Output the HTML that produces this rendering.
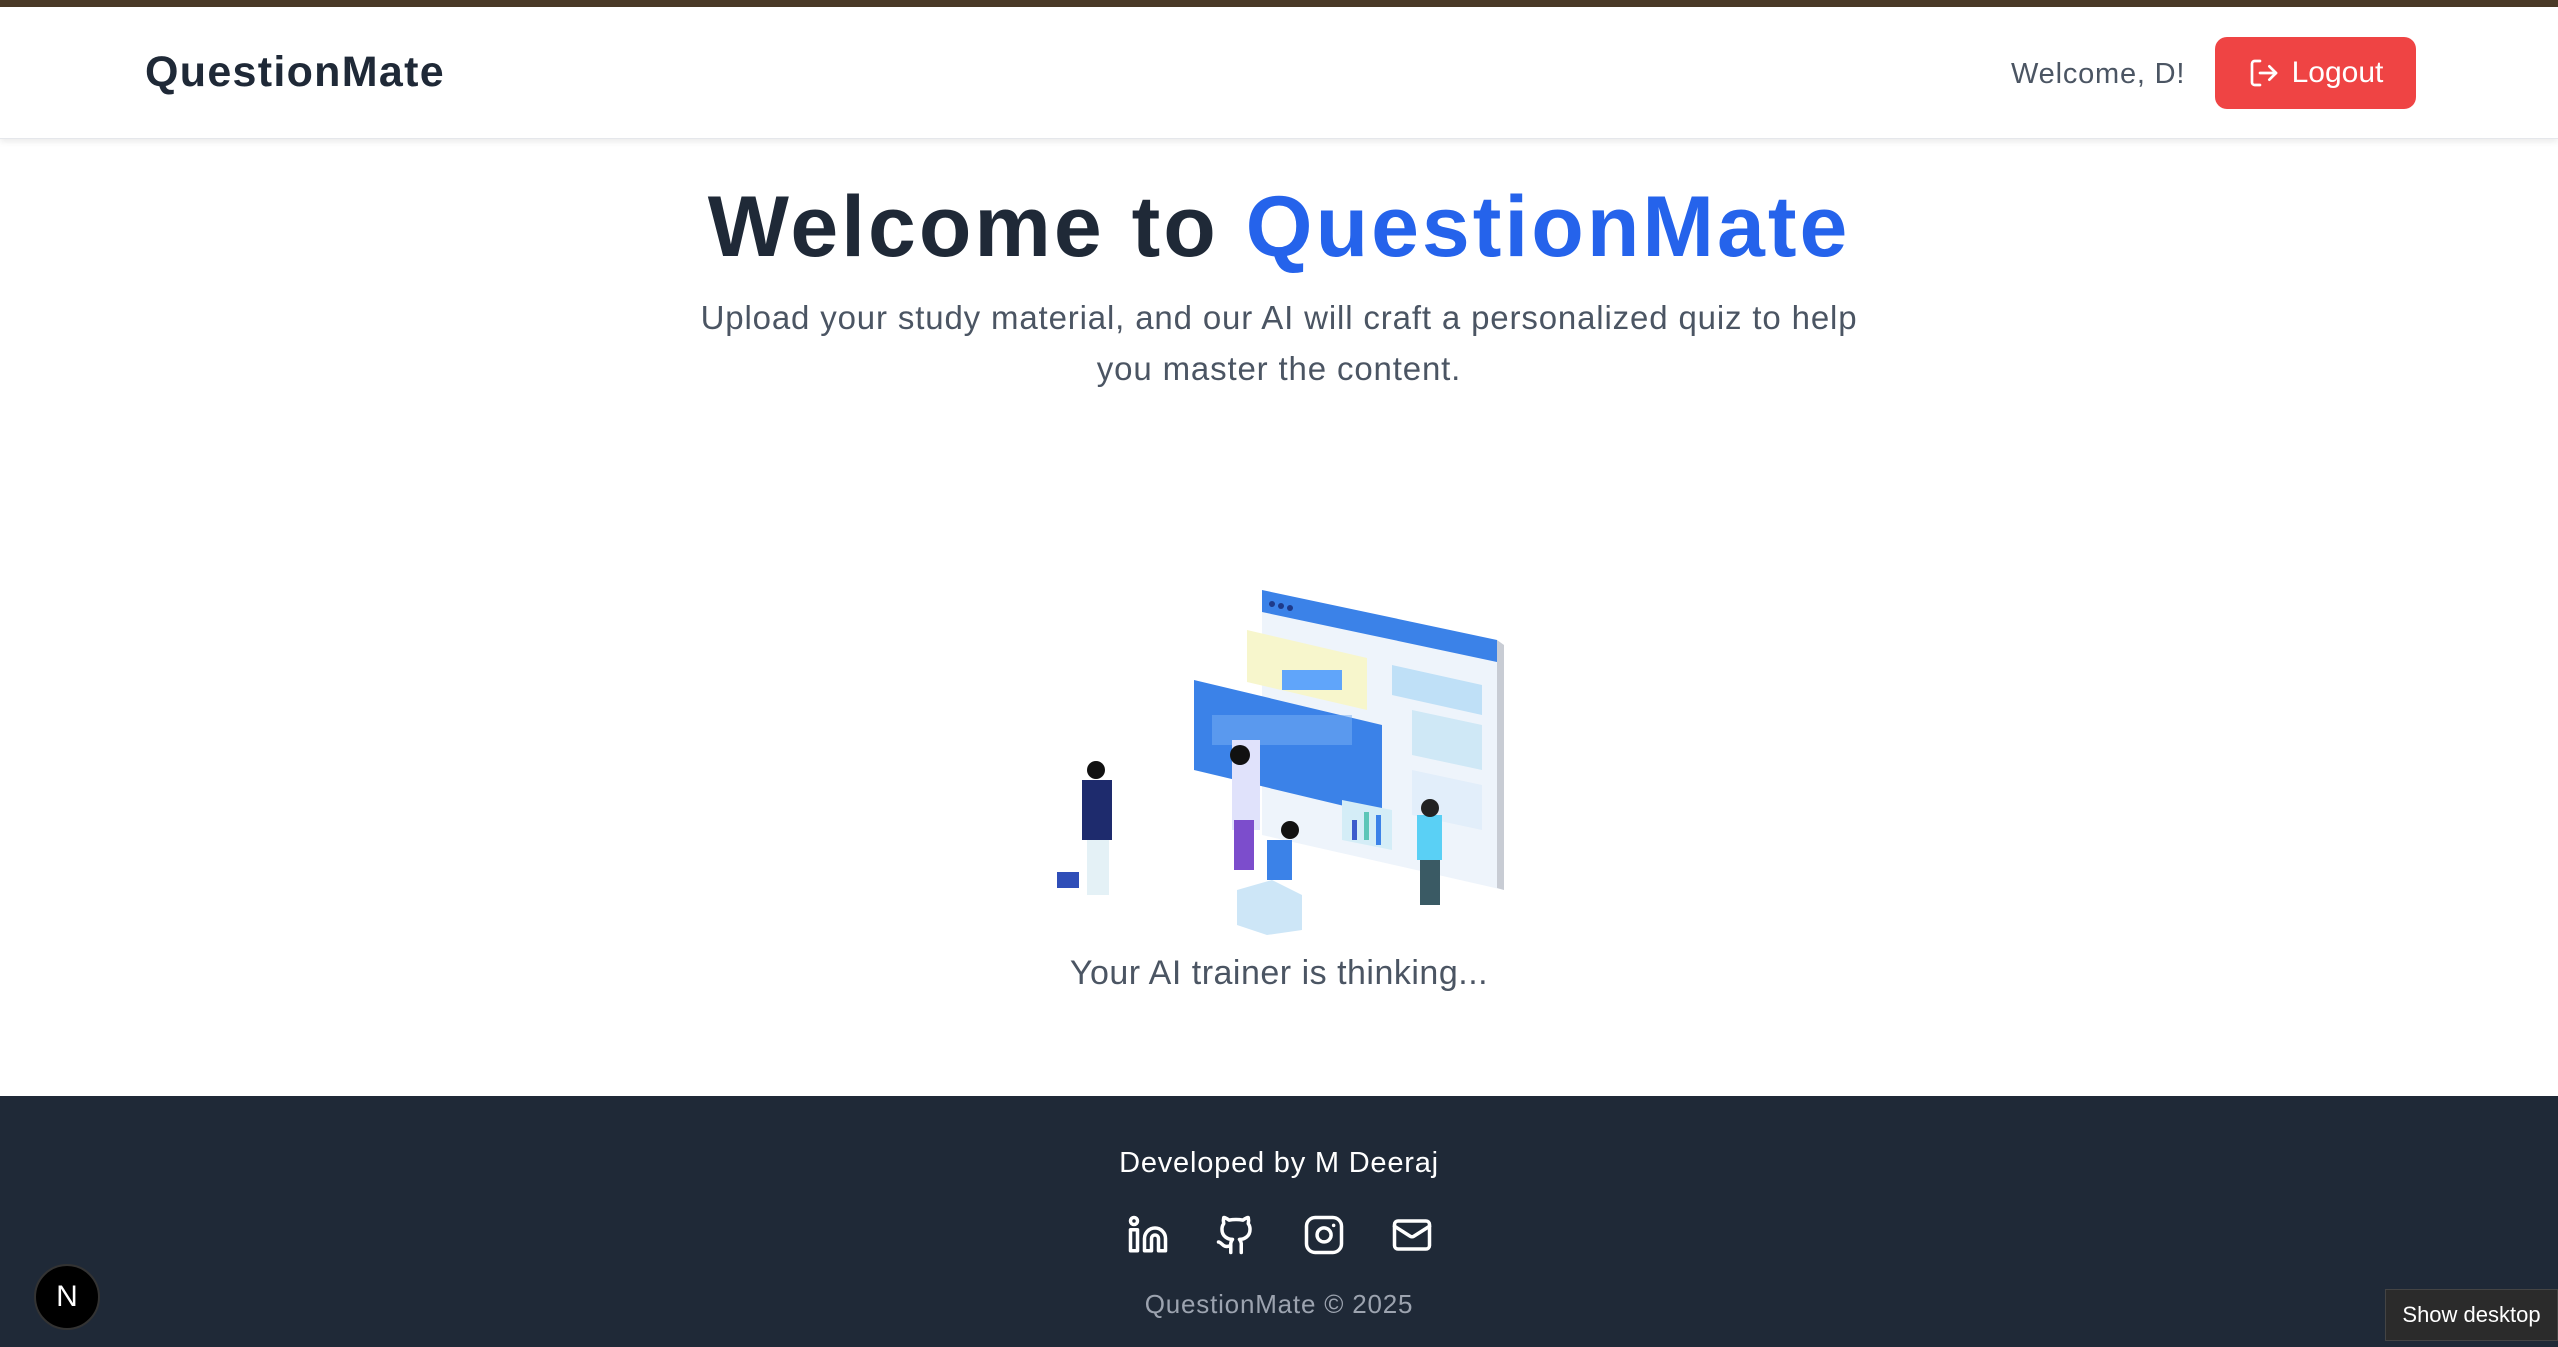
<!DOCTYPE html>
<html><head><meta charset="utf-8"><style>
*{margin:0;padding:0;box-sizing:border-box}
body{width:2558px;height:1347px;overflow:hidden;background:#fff;font-family:"Liberation Sans",sans-serif;position:relative}
.top{position:absolute;left:0;top:0;width:100%;height:7px;background:#4a3a27}
header{position:absolute;top:7px;left:0;width:100%;height:132px;background:#fff;box-shadow:0 3px 6px rgba(0,0,0,.08);border-bottom:1px solid #e5e7eb}
.logo{position:absolute;left:145px;top:41px;font-size:43px;font-weight:bold;color:#1f2937;letter-spacing:1.3px}
.wel{position:absolute;left:2011px;top:51px;font-size:29px;color:#4b5563;letter-spacing:.8px}
.btn{position:absolute;left:2215px;top:30px;width:201px;height:72px;background:#ef4444;border-radius:12px;color:#fff;font-size:30px;display:flex;align-items:center;justify-content:center;gap:12px}
h1{position:absolute;top:178px;left:0;width:100%;text-align:center;font-size:86px;font-weight:bold;color:#1f2937;letter-spacing:3px}
h1 span{color:#2563eb}
.sub{position:absolute;top:292px;left:0;width:100%;text-align:center;font-size:33px;line-height:51px;color:#4b5563;letter-spacing:.85px}
.think{position:absolute;top:954px;left:0;width:100%;text-align:center;font-size:34px;color:#4b5563;letter-spacing:.5px}
footer{position:absolute;top:1096px;left:0;width:100%;height:251px;background:#1f2937}
.dev{position:absolute;top:51px;width:100%;text-align:center;color:#fff;font-size:29px;letter-spacing:.8px}
.icons{position:absolute;top:118px;left:1127px;display:flex;gap:46px}
.copy{position:absolute;top:193px;width:100%;text-align:center;color:#9ca3af;font-size:26px;letter-spacing:.8px}
.n{position:absolute;left:34px;top:1264px;width:66px;height:66px;border-radius:50%;background:#000;border:2px solid #333;color:#fff;font-size:30px;display:flex;align-items:center;justify-content:center}
.sd{position:absolute;left:2385px;top:1289px;width:173px;height:52px;background:#2b2b2b;border:1px solid #444;color:#fff;font-size:22px;display:flex;align-items:center;justify-content:center}
</style></head><body>
<div class="top"></div>
<header>
<div class="logo">QuestionMate</div>
<div class="wel">Welcome, D!</div>
<div class="btn"><svg width="32" height="32" viewBox="0 0 24 24" fill="none" stroke="#fff" stroke-width="2" stroke-linecap="round" stroke-linejoin="round"><path d="M9 21H5a2 2 0 0 1-2-2V5a2 2 0 0 1 2-2h4"/><path d="M16 17l5-5-5-5"/><path d="M21 12H9"/></svg>Logout</div>
</header>
<h1>Welcome to <span>QuestionMate</span></h1>
<div class="sub">Upload your study material, and our AI will craft a personalized quiz to help<br>you master the content.</div>
<svg style="position:absolute;left:1052px;top:590px" width="455" height="345" viewBox="0 0 455 345">
<polygon points="210,0 452,55 452,300 210,245" fill="#eef4fb"/>
<polygon points="210,0 445,50 445,72 210,22" fill="#3b82e8"/>
<polygon points="445,50 452,55 452,300 445,298" fill="#c8ccd4"/>
<circle cx="220" cy="14" r="3" fill="#1e3a8a"/><circle cx="229" cy="16" r="3" fill="#1e3a8a"/><circle cx="238" cy="18" r="3" fill="#1e3a8a"/>
<polygon points="195,40 315,68 315,120 195,92" fill="#f7f6cc"/>
<rect x="230" y="80" width="60" height="20" fill="#60a5fa"/>
<polygon points="340,75 430,95 430,125 340,105" fill="#bfe0f7"/>
<polygon points="360,120 430,135 430,180 360,165" fill="#cfe8f6"/>
<polygon points="360,180 430,195 430,240 360,225" fill="#e2eefa"/>
<polygon points="142,90 330,135 330,225 142,180" fill="#3b82e8"/>
<rect x="160" y="125" width="140" height="30" fill="#7ab0f3" opacity=".5"/>
<polygon points="290,210 340,220 340,260 290,250" fill="#d4edf7"/>
<rect x="300" y="230" width="5" height="20" fill="#3b5bcc"/><rect x="312" y="222" width="5" height="28" fill="#5cc6b8"/><rect x="324" y="225" width="5" height="30" fill="#3b82e8"/>
<rect x="180" y="150" width="28" height="90" fill="#e0e2fb"/><rect x="182" y="230" width="20" height="50" fill="#7c4dcc"/>
<circle cx="188" cy="165" r="10" fill="#111"/>
<rect x="30" y="190" width="30" height="60" fill="#1e2b6d"/><rect x="35" y="250" width="22" height="55" fill="#e4f1f6"/><circle cx="44" cy="180" r="9" fill="#111"/>
<rect x="5" y="282" width="22" height="16" fill="#2f4eb8"/>
<polygon points="185,300 220,290 250,305 250,340 215,345 185,335" fill="#cde6f7"/>
<rect x="215" y="250" width="25" height="40" fill="#3b82e8"/><circle cx="238" cy="240" r="9" fill="#111"/>
<rect x="365" y="225" width="25" height="45" fill="#5ad0f5"/><rect x="368" y="270" width="20" height="45" fill="#3a5a64"/><circle cx="378" cy="218" r="9" fill="#222"/>
</svg>
<div class="think">Your AI trainer is thinking...</div>
<footer>
<div class="dev">Developed by M Deeraj</div>
<div class="icons">
<svg width="42" height="42" viewBox="0 0 24 24" fill="none" stroke="#fff" stroke-width="2" stroke-linecap="round" stroke-linejoin="round"><path d="M16 8a6 6 0 0 1 6 6v7h-4v-7a2 2 0 0 0-4 0v7h-4v-7a6 6 0 0 1 6-6z"/><rect x="2" y="9" width="4" height="12"/><circle cx="4" cy="4" r="2"/></svg>
<svg width="42" height="42" viewBox="0 0 24 24" fill="none" stroke="#fff" stroke-width="2" stroke-linecap="round" stroke-linejoin="round"><path d="M15 22v-4a4.8 4.8 0 0 0-1-3.5c3 0 6-2 6-5.5.08-1.25-.27-2.48-1-3.5.28-1.150.28-2.35 0-3.5 0 0-1 0-3 1.5-2.64-.5-5.360-.5-8 0C6 2 5 2 5 2c-.3 1.15-.3 2.35 0 3.5A5.4 5.4 0 0 0 4 9c0 3.5 3 5.5 6 5.5-.39.49-.68 1.05-.85 1.65S8.93 17.38 9 18v4"/><path d="M9 18c-4.51 2-5-2-7-2"/></svg>
<svg width="42" height="42" viewBox="0 0 24 24" fill="none" stroke="#fff" stroke-width="2" stroke-linecap="round" stroke-linejoin="round"><rect x="2" y="2" width="20" height="20" rx="5"/><path d="M16 11.37A4 4 0 1 1 12.63 8 4 4 0 0 1 16 11.37z"/><line x1="17.5" y1="6.5" x2="17.51" y2="6.5"/></svg>
<svg width="42" height="42" viewBox="0 0 24 24" fill="none" stroke="#fff" stroke-width="2" stroke-linecap="round" stroke-linejoin="round"><rect x="2" y="4" width="20" height="16" rx="2"/><path d="m22 7-8.97 5.7a1.94 1.94 0 0 1-2.06 0L2 7"/></svg>
</div>
<div class="copy">QuestionMate © 2025</div>
</footer>
<div class="n">N</div>
<div class="sd">Show desktop</div>
</body></html>
